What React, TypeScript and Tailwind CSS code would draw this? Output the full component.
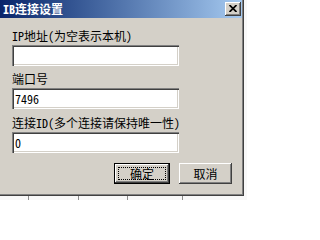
const font = "font-['Noto_Sans_Mono_CJK_SC','Noto_Sans_CJK_SC',sans-serif]"

function Field({ value }: { value?: string }) {
  return (
    <div className="mt-[3px] flex h-[21px] w-[167px] items-center bg-white pl-[3px] text-[12px] leading-[12px] text-black shadow-[inset_1px_1px_#808080,inset_2px_2px_#404040,inset_-1px_-1px_#ffffff,inset_-2px_-2px_#d4d0c8]">
      {value}
    </div>
  )
}

export default function App() {
  return (
    <div className={`relative h-[200px] w-[247px] overflow-hidden bg-[#f8f8f8] ${font}`}>
      {/* spreadsheet behind the dialog */}
      <div className="flex h-full">
        <div className="w-[29px] border-r border-[#8c8c8c]" />
        <div className="w-[50px] border-r border-[#8c8c8c]" />
        <div className="w-[49px] border-r border-[#8c8c8c]" />
        <div className="w-[55px] border-r border-[#8c8c8c]" />
      </div>

      {/* dialog */}
      <div className="absolute left-0 top-0 flex h-[196px] w-[244px] flex-col bg-[#d4d0c8] shadow-[inset_-1px_-1px_#404040,inset_-2px_-2px_#808080]">
        <div className="mr-[2px] flex h-[18px] items-center justify-between bg-linear-to-r from-[#0a246a] to-[#a6caf0] pl-[3px] pr-[1px]">
          <span className="text-[12px] font-bold leading-[12px] text-white">IB连接设置</span>
          <button className="flex h-[14px] w-[16px] items-center justify-center bg-[#d4d0c8] shadow-[inset_-1px_-1px_#404040,inset_1px_1px_#ffffff,inset_-2px_-2px_#808080]">
            <svg width="8" height="7" viewBox="0 0 8 7" className="mb-[1px]">
              <path d="M0.5 0 L7.5 7 M7.5 0 L0.5 7" stroke="#000" strokeWidth="1.7" />
            </svg>
          </button>
        </div>

        <div className="flex flex-col pl-[12px] pr-[12px] text-[12px] leading-[12px] text-black">
          <div className="mt-[12px] h-[12px]">IP地址(为空表示本机)</div>
          <Field />
          <div className="mt-[7px] h-[12px]">端口号</div>
          <Field value="7496" />
          <div className="mt-[8px] h-[12px]">连接ID(多个连接请保持唯一性)</div>
          <Field value="0" />

          <div className="mt-[10px] flex justify-end gap-[9px]">
            <button className="flex h-[21px] w-[56px] border border-black bg-[#d4d0c8]">
              <div className="flex flex-1 p-[3px] shadow-[inset_-1px_-1px_#404040,inset_1px_1px_#ffffff,inset_-2px_-2px_#808080]">
                <div className="flex flex-1 items-center justify-center border border-dotted border-black text-[12px] leading-[12px]">
                  确定
                </div>
              </div>
            </button>
            <button className="flex h-[21px] w-[53px] items-center justify-center bg-[#d4d0c8] text-[12px] leading-[12px] shadow-[inset_-1px_-1px_#404040,inset_1px_1px_#ffffff,inset_-2px_-2px_#808080]">
              取消
            </button>
          </div>
        </div>
      </div>
    </div>
  )
}
